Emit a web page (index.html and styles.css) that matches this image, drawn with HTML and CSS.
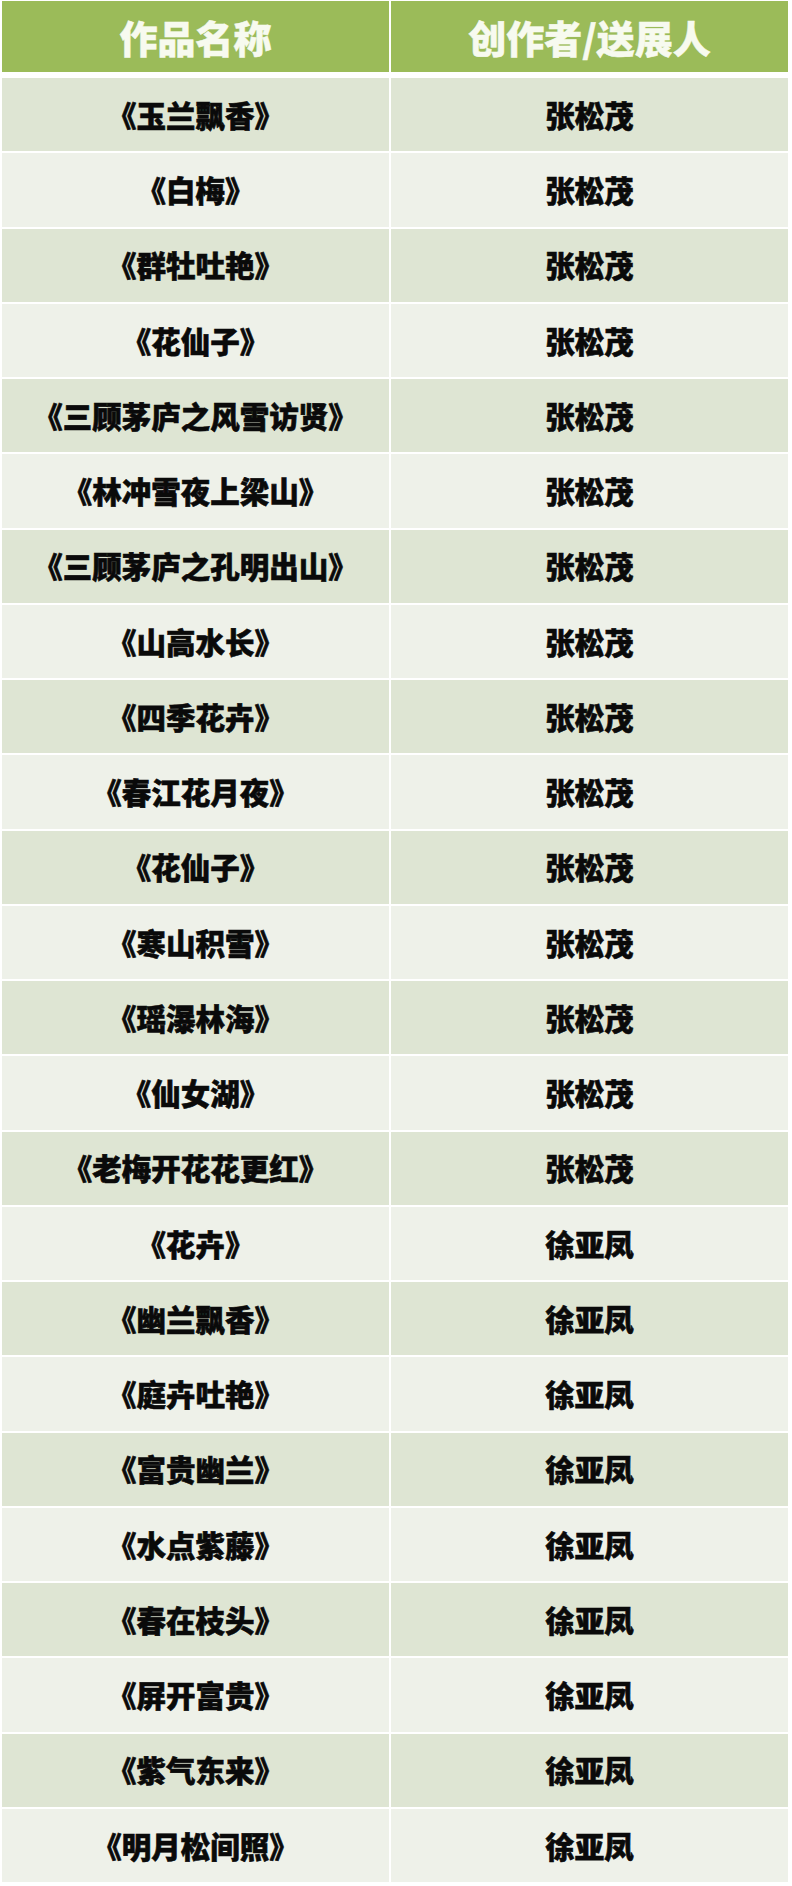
FILE: index.html
```html
<!DOCTYPE html>
<html lang="zh-CN">
<head>
<meta charset="utf-8">
<title>作品名称</title>
<link rel="stylesheet" href="styles.css">
</head>
<body>
<div class="table">
  <div class="row head"><div class="cell">作品名称</div><div class="cell">创作者/送展人</div></div>
  <div class="body">
    <div class="row odd"><div class="cell">《玉兰飘香》</div><div class="cell">张松茂</div></div>
    <div class="row even"><div class="cell">《白梅》</div><div class="cell">张松茂</div></div>
    <div class="row odd"><div class="cell">《群牡吐艳》</div><div class="cell">张松茂</div></div>
    <div class="row even"><div class="cell">《花仙子》</div><div class="cell">张松茂</div></div>
    <div class="row odd"><div class="cell">《三顾茅庐之风雪访贤》</div><div class="cell">张松茂</div></div>
    <div class="row even"><div class="cell">《林冲雪夜上梁山》</div><div class="cell">张松茂</div></div>
    <div class="row odd"><div class="cell">《三顾茅庐之孔明出山》</div><div class="cell">张松茂</div></div>
    <div class="row even"><div class="cell">《山高水长》</div><div class="cell">张松茂</div></div>
    <div class="row odd"><div class="cell">《四季花卉》</div><div class="cell">张松茂</div></div>
    <div class="row even"><div class="cell">《春江花月夜》</div><div class="cell">张松茂</div></div>
    <div class="row odd"><div class="cell">《花仙子》</div><div class="cell">张松茂</div></div>
    <div class="row even"><div class="cell">《寒山积雪》</div><div class="cell">张松茂</div></div>
    <div class="row odd"><div class="cell">《瑶瀑林海》</div><div class="cell">张松茂</div></div>
    <div class="row even"><div class="cell">《仙女湖》</div><div class="cell">张松茂</div></div>
    <div class="row odd"><div class="cell">《老梅开花花更红》</div><div class="cell">张松茂</div></div>
    <div class="row even"><div class="cell">《花卉》</div><div class="cell">徐亚凤</div></div>
    <div class="row odd"><div class="cell">《幽兰飘香》</div><div class="cell">徐亚凤</div></div>
    <div class="row even"><div class="cell">《庭卉吐艳》</div><div class="cell">徐亚凤</div></div>
    <div class="row odd"><div class="cell">《富贵幽兰》</div><div class="cell">徐亚凤</div></div>
    <div class="row even"><div class="cell">《水点紫藤》</div><div class="cell">徐亚凤</div></div>
    <div class="row odd"><div class="cell">《春在枝头》</div><div class="cell">徐亚凤</div></div>
    <div class="row even"><div class="cell">《屏开富贵》</div><div class="cell">徐亚凤</div></div>
    <div class="row odd"><div class="cell">《紫气东来》</div><div class="cell">徐亚凤</div></div>
    <div class="row even"><div class="cell">《明月松间照》</div><div class="cell">徐亚凤</div></div>
  </div>
</div>
</body>
</html>
```
FILE: styles.css
```css
html, body {
  margin: 0;
  padding: 0;
  background: #ffffff;
}
body {
  font-family: "Noto Sans CJK SC", "Noto Sans", sans-serif;
  font-weight: 900;
}
.table {
  width: 792px;
  box-sizing: border-box;
  padding: 1px 4px 3px 2px;
  display: flex;
  flex-direction: column;
  gap: 6px;
}
.body {
  display: flex;
  flex-direction: column;
  gap: 2px;
}
.row {
  display: grid;
  grid-template-columns: 387px 397px;
  column-gap: 2px;
}
.cell {
  display: flex;
  align-items: center;
  justify-content: center;
  height: 73.25px;
  font-size: 29.5px;
  color: #0a0a0a;
  line-height: 1;
  -webkit-text-stroke: 0.6px currentColor;
}
.head .cell {
  height: 71px;
  background: #9bbb59;
  color: #f7faef;
  font-size: 38px;
  -webkit-text-stroke: 0.5px currentColor;
}
.odd .cell {
  background: #dee5d3;
}
.even .cell {
  background: #eef1e9;
}
```
